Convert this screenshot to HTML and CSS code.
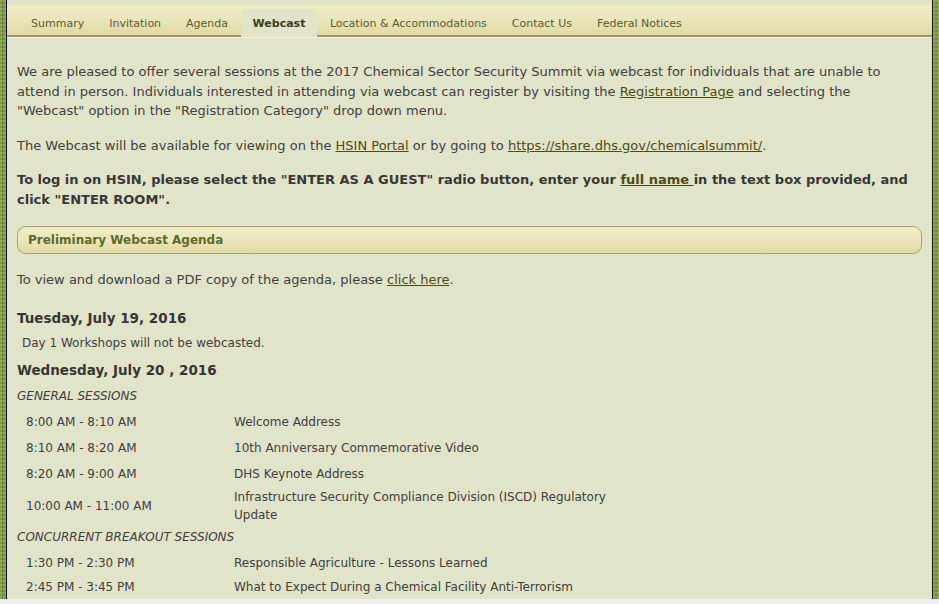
FILE: index.html
```html
<!DOCTYPE html>
<html lang="en">
<head>
    <meta charset="UTF-8">
    <title>Webcast - 2017 Chemical Sector Security Summit</title>
    <link rel="stylesheet" href="styles.css">
</head>
<body>
    <div class="frame">
        <div class="rail"></div>
        <div class="main">
            <ul class="tabs">
                <li><a href="#">Summary</a></li>
                <li><a href="#">Invitation</a></li>
                <li><a href="#">Agenda</a></li>
                <li class="active"><a href="#">Webcast</a></li>
                <li><a href="#">Location &amp; Accommodations</a></li>
                <li><a href="#">Contact Us</a></li>
                <li><a href="#">Federal Notices</a></li>
            </ul>

            <div class="content">
                <p>We are pleased to offer several sessions at the 2017 Chemical Sector Security Summit via webcast for individuals that are unable to attend in person. Individuals interested in attending via webcast can register by visiting the <a href="#">Registration Page</a> and selecting the "Webcast" option in the "Registration Category" drop down menu.</p>
                <p>The Webcast will be available for viewing on the <a href="#">HSIN Portal</a> or by going to <a href="#">https://share.dhs.gov/chemicalsummit/</a>.</p>
                <p class="strong">To log in on HSIN, please select the "ENTER AS A GUEST" radio button, enter your <a href="#">full name </a>in the text box provided, and click "ENTER ROOM".</p>

                <h2 class="box-title">Preliminary Webcast Agenda</h2>

                <p class="pdf">To view and download a PDF copy of the agenda, please <a href="#">click here</a>.</p>

                <h3 class="day">Tuesday, July 19, 2016</h3>
                <div class="note">Day 1 Workshops will not be webcasted.</div>

                <h3 class="day">Wednesday, July 20 , 2016</h3>
                <div class="schedule">
                    <div class="label">GENERAL SESSIONS</div>
                    <div class="time">8:00 AM - 8:10 AM</div>
                    <div class="title">Welcome Address</div>
                    <div class="time">8:10 AM - 8:20 AM</div>
                    <div class="title">10th Anniversary Commemorative Video</div>
                    <div class="time">8:20 AM - 9:00 AM</div>
                    <div class="title">DHS Keynote Address</div>
                    <div class="time">10:00 AM - 11:00 AM</div>
                    <div class="title">Infrastructure Security Compliance Division (ISCD) Regulatory Update</div>
                    <div class="label">CONCURRENT BREAKOUT SESSIONS</div>
                    <div class="time">1:30 PM - 2:30 PM</div>
                    <div class="title">Responsible Agriculture - Lessons Learned</div>
                    <div class="time top">2:45 PM - 3:45 PM</div>
                    <div class="title top">What to Expect During a Chemical Facility Anti-Terrorism</div>
                </div>
            </div>
        </div>
        <div class="rail"></div>
    </div>
</body>
</html>
```

FILE: styles.css
```css
html, body {
    margin: 0;
    padding: 0;
}
body {
    background-color: #efefef;
    font-family: "DejaVu Sans", Verdana, sans-serif;
    font-size: 13px;
    color: #404040;
}
.frame {
    display: flex;
    height: 599px;
    overflow: hidden;
}
.rail {
    width: 6px;
    flex: none;
    background-color: #82994a;
    background-image:
        radial-gradient(circle at 1px 1px, #93ab5a 1px, transparent 1.5px),
        radial-gradient(circle at 3px 3px, #708838 1px, transparent 1.5px);
    background-size: 4px 4px;
}
.main {
    flex: 1;
    background: #e1e4c9;
    border-left: 1px solid #111;
    border-right: 1px solid #111;
    padding-top: 5px;
    overflow: hidden;
}

/* tabs */
.tabs {
    list-style: none;
    margin: 0;
    padding: 0 0 0 11.5px;
    display: flex;
    align-items: flex-end;
    height: 30px;
    background: linear-gradient(#f0edc5, #ebe6b9 50%, #e0d9a3);
    border-bottom: 2px solid #9d9877;
    box-shadow: 0 1px 0 #f4f2de;
}
.tabs li {
    box-sizing: border-box;
    height: 28px;
    display: flex;
    align-items: center;
    padding: 2px 12.5px 0;
    margin-bottom: -2px;
    border-bottom: 2px solid transparent;
}
.tabs a {
    font-size: 11px;
    color: #5b5a32;
    text-decoration: none;
}
.tabs li.active {
    padding: 2px 12px 0;
    background: #e1e4c9;
    border-radius: 5px 5px 0 0;
    border-bottom-color: #e1e4c9;
}
.tabs li.active a {
    font-weight: bold;
    color: #3f3c1d;
}

/* content */
.content {
    padding: 25px 10px 0 10px;
}
.content p {
    margin: 0 10px 15px 0;
    line-height: 19.5px;
}
.content p.strong {
    font-weight: bold;
    color: #383838;
    margin-bottom: 17px;
}
.content p.pdf {
    margin-bottom: 17px;
}
.content a {
    color: #4e4b14;
}
.box-title {
    margin: 0 0 16px;
    height: 26px;
    line-height: 26px;
    padding: 0 10px;
    font-size: 12px;
    color: #5c6b2a;
    border: 1px solid #a8a36c;
    border-radius: 9px;
    background: linear-gradient(#efecc4, #ece7bb 50%, #e1daa6);
}
.day {
    margin: 0;
    font-size: 13.5px;
    color: #363636;
    line-height: 22px;
}
.note {
    font-size: 12px;
    padding-left: 5px;
    line-height: 18px;
    margin: 5px 0 7px;
}
.schedule {
    display: grid;
    grid-template-columns: 217px 392px;
    row-gap: 2px;
    align-items: center;
    margin-top: 4px;
    font-size: 12px;
    line-height: 18px;
}
.schedule .label {
    grid-column: 1 / 3;
    font-style: italic;
    min-height: 23px;
    display: flex;
    align-items: center;
}
.schedule .time {
    padding-left: 9px;
    min-height: 24px;
    display: flex;
    align-items: center;
}
.schedule .title {
    min-height: 24px;
    display: flex;
    align-items: center;
}
.schedule .top {
    align-self: start;
    align-items: flex-start;
    padding-top: 1px;
}
```
